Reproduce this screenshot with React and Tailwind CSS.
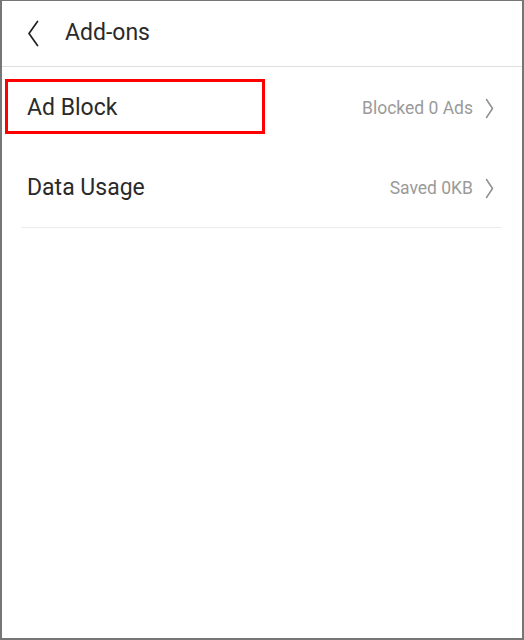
import React from "react";

function RightChevron() {
  return (
    <svg width="9" height="21" viewBox="0 0 9 21" className="block">
      <path d="M1.5 1.5 L7.5 10.5 L1.5 19.5" fill="none" stroke="#8f8f8f" strokeWidth="1.5" strokeLinecap="round" strokeLinejoin="round" />
    </svg>
  );
}

function Row({ label, value }) {
  return (
    <div className="flex h-[80px] items-center justify-between pl-[25px] pr-[28px] pt-[3px]">
      <span className="text-[23px] text-[#2a2a2a]">{label}</span>
      <div className="flex items-center gap-[12px]">
        <span className="text-[17.5px] text-[#9a9a9a]">{value}</span>
        <RightChevron />
      </div>
    </div>
  );
}

export default function App() {
  return (
    <div
      className="relative w-[524px] h-[640px] bg-white border-l-2 border-t border-r-2 border-b-2 border-[#767676] overflow-hidden"
      style={{ fontFamily: "Roboto, 'Noto Sans', sans-serif" }}
    >
      <div className="flex h-[66px] items-center border-b border-[#dedede] pl-[25px]">
        <svg width="12" height="27" viewBox="0 0 12 27" className="block">
          <path d="M10.5 1.5 L2 13.5 L10.5 25.5" fill="none" stroke="#222" strokeWidth="1.7" strokeLinecap="round" strokeLinejoin="round" />
        </svg>
        <span className="ml-[26px] text-[23px] text-[#2a2a2a]">Add-ons</span>
      </div>
      <Row label="Ad Block" value="Blocked 0 Ads" />
      <Row label="Data Usage" value="Saved 0KB" />
      <div className="ml-[19px] mr-[20px] h-px bg-[#ececec]" />
      <div className="absolute left-[3px] top-[78px] w-[260px] h-[55px] border-[3px] border-[#ff0000]" />
    </div>
  );
}
